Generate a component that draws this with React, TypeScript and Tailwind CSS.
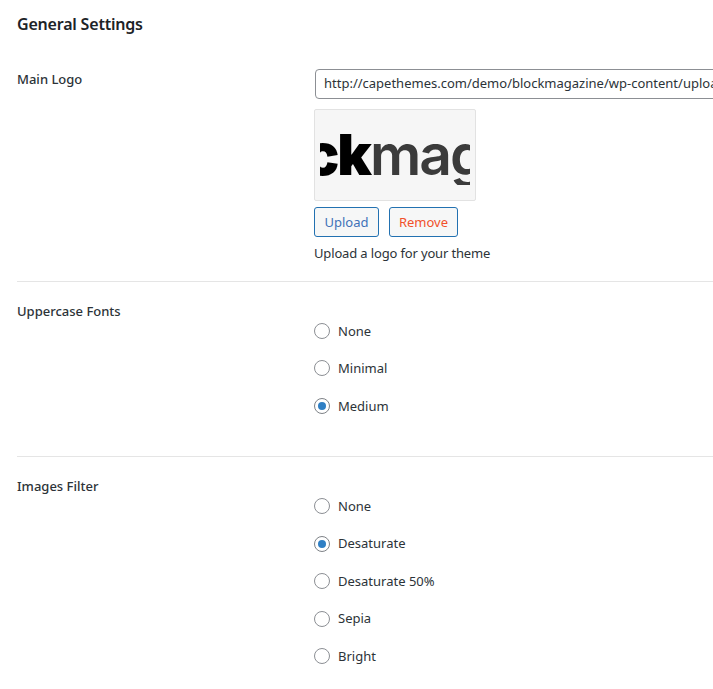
const font = { fontFamily: '"Noto Sans", sans-serif' }

function Radio({ label, checked }: { label: string; checked?: boolean }) {
  return (
    <div className="flex items-center h-[37.5px]">
      <span className={`w-4 h-4 rounded-full border bg-white flex items-center justify-center ${checked ? "border-[#7e8287]" : "border-[#8c8f94]"}`}>
        {checked && <span className="w-2 h-2 rounded-full bg-[#2f7fc4]" />}
      </span>
      <span className="ml-2 pt-px text-[13px] text-[#2c3338]">{label}</span>
    </div>
  )
}

function Section({ label, options }: { label: string; options: { label: string; checked?: boolean }[] }) {
  return (
    <div className="flex">
      <div className="w-[297px] shrink-0 text-[13px] font-medium text-[#2c3338] pt-[20px]">{label}</div>
      <div className="pt-[30px]">
        {options.map((o) => (
          <Radio key={o.label} label={o.label} checked={o.checked} />
        ))}
      </div>
    </div>
  )
}

export default function App() {
  return (
    <div className="w-[713px] h-[689px] overflow-hidden bg-white pl-[17px]" style={font}>
      <h2 className="text-[16px] leading-[22px] font-semibold tracking-[-0.2px] text-[#1d2327] pt-[13px]">General Settings</h2>
      <div className="flex mt-[34px]">
        <div className="w-[297px] shrink-0 text-[13px] font-medium text-[#2c3338] pt-[1px]">Main Logo</div>
        <div className="shrink-0 w-[420px]">
          <div className="ml-px h-[30px] border border-[#8c8f94] rounded-[4px] px-[8px] flex items-center text-[13px] text-[#2c3338] whitespace-nowrap overflow-hidden">
            http://capethemes.com/demo/blockmagazine/wp-content/uploads/2019/logo.png
          </div>
          <div className="w-[162px] h-[92px] mt-[10px] bg-[#f6f6f6] border border-[#e2e2e2] rounded-[2px] flex items-center justify-center">
            <div className="w-[150px] h-[60px] overflow-hidden flex items-center whitespace-nowrap text-[57px] leading-[60px] tracking-[-2px]" style={{ fontFamily: "Inter, sans-serif" }}>
              <span className="font-black text-black ml-[-15px]">ck</span>
              <span className="font-semibold text-[#3b3b3b]">mag</span>
            </div>
          </div>
          <div className="flex gap-[10px] mt-[6px]">
            <button className="w-[65px] h-[30px] pt-px border border-[#2271b1] rounded-[3px] bg-[#f6f7f7] text-[13px] text-[#3f72b8]">Upload</button>
            <button className="w-[69px] h-[30px] pt-px border border-[#2271b1] rounded-[3px] bg-[#f6f7f7] text-[13px] text-[#f1512b]">Remove</button>
          </div>
          <p className="text-[13px] tracking-[-0.15px] text-[#2c3338] mt-[7px] leading-[18px]">Upload a logo for your theme</p>
        </div>
      </div>
      <div className="border-t border-[#e5e5e5] mt-[19px]" />
      <Section
        label="Uppercase Fonts"
        options={[{ label: "None" }, { label: "Minimal" }, { label: "Medium", checked: true }]}
      />
      <div className="border-t border-[#e5e5e5] mt-[31.95px]" />
      <Section
        label="Images Filter"
        options={[
          { label: "None" },
          { label: "Desaturate", checked: true },
          { label: "Desaturate 50%" },
          { label: "Sepia" },
          { label: "Bright" },
        ]}
      />
    </div>
  )
}
